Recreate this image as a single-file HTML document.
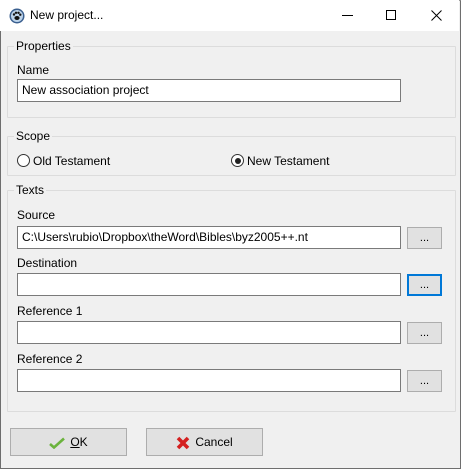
<!DOCTYPE html>
<html><head><style>
*{box-sizing:border-box;margin:0;padding:0}
body{width:461px;height:469px;background:#f0f0f0;font-family:"Liberation Sans",sans-serif;font-size:12px;color:#000;position:relative;overflow:hidden}
.win{position:absolute;left:0;top:0;width:461px;height:469px;border:1px solid #6e6e6e;border-top:1px solid #9a9a9a}
.title{position:absolute;left:0;top:0;width:459px;height:31px;background:#fff}
.abs{position:absolute}
.grp{position:absolute;border:1px solid #dcdcdc;border-radius:1px}
.gl{position:absolute;background:#f0f0f0;padding:0 2px}
.inp{position:absolute;background:#fff;border:1px solid #7a7a7a;height:23px;padding:3px 4px;white-space:nowrap;overflow:hidden}
.btn{position:absolute;background:#e1e1e1;border:1px solid #adadad;width:35px;height:22px;text-align:center;line-height:20px;font-size:11px}
.big{position:absolute;background:#e1e1e1;border:1px solid #adadad;height:28px;width:117px;text-align:center;line-height:26px;font-size:12px}
.rad{position:absolute;width:13px;height:13px;border:1px solid #333;border-radius:50%;background:#fff}
</style></head><body>
<div class="win"></div>
<div class="title"></div>
<svg class="abs" style="left:9px;top:8px" width="16" height="16" viewBox="0 0 16 16"><circle cx="8" cy="8" r="7.5" fill="#3a5f8f"/><circle cx="8" cy="8" r="6" fill="#bcd3ea"/><ellipse cx="8" cy="10" rx="2.6" ry="2" fill="#111"/><circle cx="5" cy="6.5" r="1.2" fill="#111"/><circle cx="7" cy="4.8" r="1.2" fill="#111"/><circle cx="9.5" cy="4.8" r="1.2" fill="#111"/><circle cx="11.3" cy="6.7" r="1.2" fill="#111"/></svg>
<div class="abs" style="left:30px;top:8px;font-size:12px">New project...</div>
<div class="abs" style="left:342px;top:15px;width:11px;height:1px;background:#000"></div>
<div class="abs" style="left:386px;top:10px;width:10px;height:10px;border:1px solid #000"></div>
<svg class="abs" style="left:431px;top:10px" width="11" height="11"><path d="M0.5 0.5L10.5 10.5M10.5 0.5L0.5 10.5" stroke="#000" stroke-width="1"/></svg>

<div class="grp" style="left:7px;top:46px;width:449px;height:72px"></div>
<div class="gl" style="left:14px;top:39px">Properties</div>
<div class="abs" style="left:17px;top:63px">Name</div>
<div class="inp" style="left:17px;top:79px;width:384px">New association project</div>

<div class="grp" style="left:7px;top:136px;width:449px;height:40px"></div>
<div class="gl" style="left:14px;top:129px">Scope</div>
<div class="rad" style="left:17px;top:154px"></div>
<div class="abs" style="left:33px;top:154px">Old Testament</div>
<div class="rad" style="left:231px;top:154px"><div style="position:absolute;left:2.5px;top:2.5px;width:6px;height:6px;border-radius:50%;background:#222"></div></div>
<div class="abs" style="left:247px;top:154px">New Testament</div>

<div class="grp" style="left:7px;top:190px;width:449px;height:222px"></div>
<div class="gl" style="left:14px;top:183px">Texts</div>
<div class="abs" style="left:17px;top:208px">Source</div>
<div class="inp" style="left:17px;top:226px;width:384px">C:\Users\rubio\Dropbox\theWord\Bibles\byz2005++.nt</div>
<div class="btn" style="left:407px;top:227px">...</div>
<div class="abs" style="left:17px;top:256px">Destination</div>
<div class="inp" style="left:17px;top:273px;width:384px"></div>
<div class="btn" style="left:407px;top:274px;border:2px solid #0078d7;line-height:18px">...</div>
<div class="abs" style="left:17px;top:304px">Reference 1</div>
<div class="inp" style="left:17px;top:321px;width:384px"></div>
<div class="btn" style="left:407px;top:322px">...</div>
<div class="abs" style="left:17px;top:352px">Reference 2</div>
<div class="inp" style="left:17px;top:369px;width:384px"></div>
<div class="btn" style="left:407px;top:370px">...</div>

<div class="big" style="left:10px;top:428px"><svg style="vertical-align:middle;margin-right:5px" width="16" height="12" viewBox="0 0 16 12"><path d="M1 7L5 10.5L15 1.5" stroke="#6bb33d" stroke-width="2.6" fill="none"/></svg><span style="text-decoration:underline">O</span>K</div>
<div class="big" style="left:146px;top:428px"><svg style="vertical-align:middle;margin-right:5px" width="14" height="14" viewBox="0 0 14 14"><path d="M2 2L12 12M12 2L2 12" stroke="#d42020" stroke-width="3.6"/></svg>Cancel</div>
</body></html>
